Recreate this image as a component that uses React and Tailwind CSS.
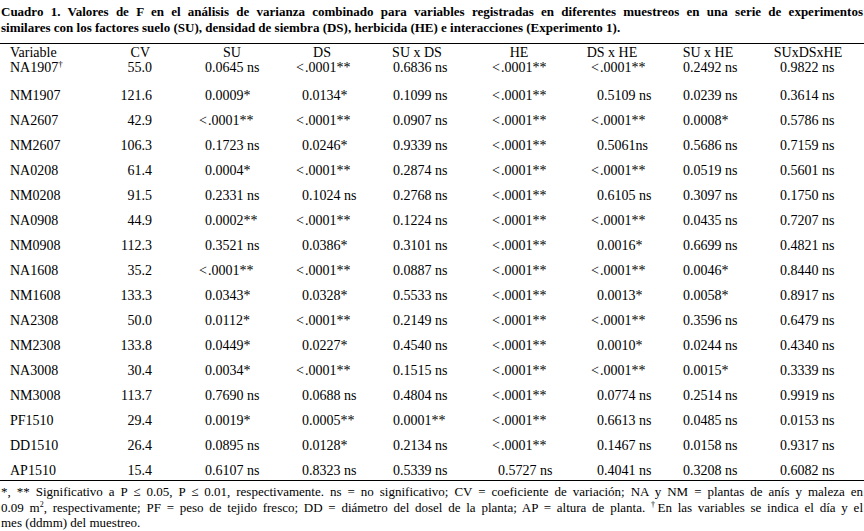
import React from 'react';

const rows = [
  ['NA1907', '55.0', '0.0645 ns', '<.0001**', '0.6836 ns', '<.0001**', '<.0001**', '0.2492 ns', '0.9822 ns'],
  ['NM1907', '121.6', '0.0009*', '0.0134*', '0.1099 ns', '<.0001**', '0.5109 ns', '0.0239 ns', '0.3614 ns'],
  ['NA2607', '42.9', '<.0001**', '<.0001**', '0.0907 ns', '<.0001**', '<.0001**', '0.0008*', '0.5786 ns'],
  ['NM2607', '106.3', '0.1723 ns', '0.0246*', '0.9339 ns', '<.0001**', '0.5061ns', '0.5686 ns', '0.7159 ns'],
  ['NA0208', '61.4', '0.0004*', '<.0001**', '0.2874 ns', '<.0001**', '<.0001**', '0.0519 ns', '0.5601 ns'],
  ['NM0208', '91.5', '0.2331 ns', '0.1024 ns', '0.2768 ns', '<.0001**', '0.6105 ns', '0.3097 ns', '0.1750 ns'],
  ['NA0908', '44.9', '0.0002**', '<.0001**', '0.1224 ns', '<.0001**', '<.0001**', '0.0435 ns', '0.7207 ns'],
  ['NM0908', '112.3', '0.3521 ns', '0.0386*', '0.3101 ns', '<.0001**', '0.0016*', '0.6699 ns', '0.4821 ns'],
  ['NA1608', '35.2', '<.0001**', '<.0001**', '0.0887 ns', '<.0001**', '<.0001**', '0.0046*', '0.8440 ns'],
  ['NM1608', '133.3', '0.0343*', '0.0328*', '0.5533 ns', '<.0001**', '0.0013*', '0.0058*', '0.8917 ns'],
  ['NA2308', '50.0', '0.0112*', '<.0001**', '0.2149 ns', '<.0001**', '<.0001**', '0.3596 ns', '0.6479 ns'],
  ['NM2308', '133.8', '0.0449*', '0.0227*', '0.4540 ns', '<.0001**', '0.0010*', '0.0244 ns', '0.4340 ns'],
  ['NA3008', '30.4', '0.0034*', '<.0001**', '0.1515 ns', '<.0001**', '<.0001**', '0.0015*', '0.3339 ns'],
  ['NM3008', '113.7', '0.7690 ns', '0.0688 ns', '0.4804 ns', '<.0001**', '0.0774 ns', '0.2514 ns', '0.9919 ns'],
  ['PF1510', '29.4', '0.0019*', '0.0005**', '0.0001**', '<.0001**', '0.6613 ns', '0.0485 ns', '0.0153 ns'],
  ['DD1510', '26.4', '0.0895 ns', '0.0128*', '0.2134 ns', '<.0001**', '0.1467 ns', '0.0158 ns', '0.9317 ns'],
  ['AP1510', '15.4', '0.6107 ns', '0.8323 ns', '0.5339 ns', '0.5727 ns', '0.4041 ns', '0.3208 ns', '0.6082 ns'],
];

const headers = ['SU', 'DS', 'SU x DS', 'HE', 'DS x HE', 'SU x HE', 'SUxDSxHE'];
const valuePad = ['pl-[21px]', 'pl-[22px]', 'pl-[29px]', 'pl-[28px]', 'pl-[29px]', 'pl-[27px]', 'pl-[20px]'];

const grid = 'grid grid-cols-[110px_74px_96px_84px_106px_98px_88px_104px_96px]';

const Value = ({ text }) =>
  text.startsWith('<') ? (
    <span className="-ml-[6px]">
      &lt;<span className="ml-[1px]">{text.slice(1)}</span>
    </span>
  ) : (
    <span>{text}</span>
  );

const DataRow = ({ row, first, last }) => {
  const height = first
    ? 'h-[22.5px] items-start'
    : last
      ? 'h-[22.5px] items-start pt-[5px]'
      : 'h-[25px] items-center';
  return (
    <div className={`${grid} ${height} leading-[15px]`}>
      <div className="pl-[10px] whitespace-nowrap">
        {row[0]}
        {first && <span className="text-[9px] align-[5px] leading-none">†</span>}
      </div>
      <div className="text-right pr-[32px]">{row[1]}</div>
      {row.slice(2).map((v, i) => (
        <div key={i} className={`${valuePad[i]} whitespace-nowrap`}>
          <Value text={v} />
        </div>
      ))}
    </div>
  );
};

export default function App() {
  return (
    <div className="w-[864px] h-[531px] bg-white text-black overflow-hidden [font-family:'Liberation_Serif',serif]">
      <div className="pt-[4px] px-[1px] text-[13px] font-bold leading-[16px]">
        <div className="text-justify [text-align-last:justify] whitespace-nowrap">
          Cuadro 1. Valores de F en el análisis de varianza combinado para variables registradas en diferentes muestreos en una serie de experimentos
        </div>
        <div>
          similares con los factores suelo (SU), densidad de siembra (DS), herbicida (HE) e interacciones (Experimento 1).
        </div>
      </div>

      <div className="mt-[7px] border-t border-b border-black text-[14px]">
        <div className={`${grid} h-[16px] items-center leading-[15px]`}>
          <div className="pl-[10px]">Variable</div>
          <div className="text-right pr-[34px]">CV</div>
          {headers.map((h) => (
            <div key={h} className="text-center whitespace-nowrap">{h}</div>
          ))}
        </div>
        {rows.map((r, i) => (
          <DataRow key={r[0]} row={r} first={i === 0} last={i === rows.length - 1} />
        ))}
      </div>

      <div className="mt-[3px] px-[1px] text-[13px] leading-[15.5px]">
        <div className="text-justify [text-align-last:justify] whitespace-nowrap">
          *, ** Significativo a P ≤ 0.05, P ≤ 0.01, respectivamente. ns = no significativo; CV = coeficiente de variación; NA y NM = plantas de anís y maleza en
        </div>
        <div className="text-justify [text-align-last:justify] whitespace-nowrap">
          0.09 m<span className="text-[8px] align-[5px] leading-none">2</span>, respectivamente; PF = peso de tejido fresco; DD = diámetro del dosel de la planta; AP = altura de planta. <span className="text-[8px] align-[5px] leading-none">†</span>En las variables se indica el día y el
        </div>
        <div>mes (ddmm) del muestreo.</div>
      </div>
    </div>
  );
}
